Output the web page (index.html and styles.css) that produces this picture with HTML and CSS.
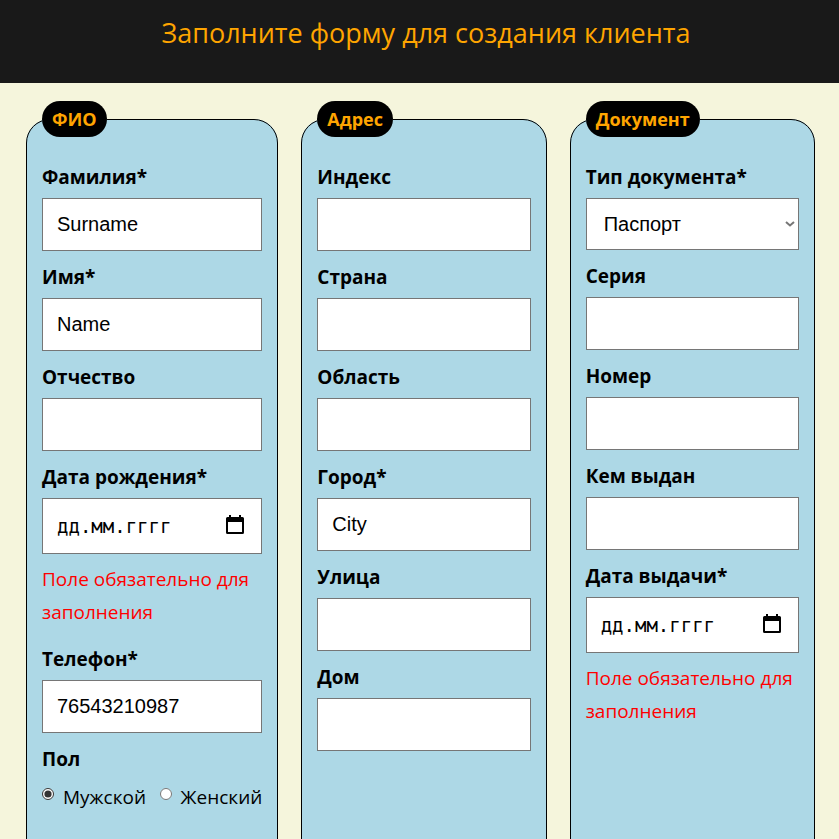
FILE: index.html
```html
<!DOCTYPE html>
<html lang="ru">
<head>
<meta charset="utf-8">
<meta name="viewport" content="width=device-width, initial-scale=1">
<title>Создание клиента</title>
<link rel="stylesheet" href="styles.css">
</head>
<body>
<header class="header">
  <h1 class="title">Заполните форму для создания клиента</h1>
</header>
<form class="form">
  <fieldset class="card">
    <legend class="badge">ФИО</legend>
    <div class="field"><label for="surname">Фамилия*</label><input class="control" id="surname" type="text" value="Surname"></div>
    <div class="field"><label for="name">Имя*</label><input class="control" id="name" type="text" value="Name"></div>
    <div class="field"><label for="patronymic">Отчество</label><input class="control" id="patronymic" type="text"></div>
    <div class="field">
      <label for="birth">Дата рождения*</label>
      <div class="wrap">
        <input class="control date" id="birth" type="text" placeholder="дд.мм.гггг">
        <button class="calendar" type="button" aria-label="Календарь"><svg viewBox="0 0 18 20"><path fill-rule="evenodd" d="M3 0h2v2h8V0h2v2h1.500q1.500 0 1.500 1.500v14q0 1.500-1.500 1.500h-15Q0 19 0 17.500v-14Q0 2 1.500 2H3zM2 7v10h14V7z"/></svg></button>
      </div>
      <p class="error">Поле обязательно для заполнения</p>
    </div>
    <div class="field"><label for="phone">Телефон*</label><input class="control" id="phone" type="tel" value="76543210987"></div>
    <div class="field" role="radiogroup" aria-labelledby="sex">
      <span class="caption" id="sex">Пол</span>
      <div class="radios">
        <label class="radio"><input type="radio" name="sex" checked>Мужской</label>
        <label class="radio"><input type="radio" name="sex">Женский</label>
      </div>
    </div>
  </fieldset>
  <fieldset class="card">
    <legend class="badge">Адрес</legend>
    <div class="field"><label for="index">Индекс</label><input class="control" id="index" type="text"></div>
    <div class="field"><label for="country">Страна</label><input class="control" id="country" type="text"></div>
    <div class="field"><label for="region">Область</label><input class="control" id="region" type="text"></div>
    <div class="field"><label for="city">Город*</label><input class="control" id="city" type="text" value="City"></div>
    <div class="field"><label for="street">Улица</label><input class="control" id="street" type="text"></div>
    <div class="field"><label for="house">Дом</label><input class="control" id="house" type="text"></div>
  </fieldset>
  <fieldset class="card">
    <legend class="badge">Документ</legend>
    <div class="field">
      <label for="doctype">Тип документа*</label>
      <div class="wrap">
        <select class="control select" id="doctype"><option>Паспорт</option></select>
        <svg class="chevron" viewBox="0 0 10 6"><path d="M1 1l4 3.500L9 1"/></svg>
      </div>
    </div>
    <div class="field"><label for="series">Серия</label><input class="control" id="series" type="text"></div>
    <div class="field"><label for="number">Номер</label><input class="control" id="number" type="text"></div>
    <div class="field"><label for="issuer">Кем выдан</label><input class="control" id="issuer" type="text"></div>
    <div class="field">
      <label for="issued">Дата выдачи*</label>
      <div class="wrap">
        <input class="control date" id="issued" type="text" placeholder="дд.мм.гггг">
        <button class="calendar" type="button" aria-label="Календарь"><svg viewBox="0 0 18 20"><path fill-rule="evenodd" d="M3 0h2v2h8V0h2v2h1.500q1.500 0 1.500 1.500v14q0 1.500-1.500 1.500h-15Q0 19 0 17.500v-14Q0 2 1.500 2H3zM2 7v10h14V7z"/></svg></button>
      </div>
      <p class="error">Поле обязательно для заполнения</p>
    </div>
  </fieldset>
</form>
</body>
</html>
```
FILE: styles.css
```css
* {
  box-sizing: border-box;
}

body {
  margin: 0;
  background: beige;
  color: #000;
  font-family: "Open Sans", "Noto Sans", sans-serif;
  font-size: 19px;
}

.header {
  padding: 13px 0 30px 13px;
  background: #191919;
}

.title {
  margin: 0;
  color: orange;
  font-size: 27px;
  font-weight: 400;
  line-height: 40px;
  text-align: center;
}

.form {
  display: grid;
  grid-template-columns: 36fr 35fr 35fr;
  gap: 23px;
  padding: 18px 24px 18px 26px;
}

.card {
  min-width: 0;
  margin: 0;
  padding: 27px 15px 80px;
  border: 1px solid #000;
  border-radius: 24px;
  background: lightblue;
}

.badge {
  padding: 1px 10px 0;
  border-radius: 18px;
  background: #000;
  color: orange;
  font-size: 18px;
  font-weight: 700;
  line-height: 35px;
}

.field {
  display: flex;
  flex-direction: column;
  gap: 8px;
  margin-bottom: 13px;
  line-height: 26px;
}

.field > label,
.caption {
  font-size: 19px;
  font-weight: 700;
}

.control {
  display: block;
  width: 100%;
  height: 53px;
  margin: 0;
  padding: 0 14px;
  border: 1px solid #767676;
  border-radius: 0;
  background: #fff;
  color: #000;
  font-family: "Liberation Sans", Arial, sans-serif;
  font-size: 20px;
}

.wrap {
  position: relative;
}

.select {
  height: 52px;
  padding: 0 17px;
  appearance: none;
}

.chevron {
  position: absolute;
  top: 23px;
  right: 4px;
  width: 10px;
  height: 6px;
  fill: none;
  stroke: #767676;
  stroke-width: 2;
  pointer-events: none;
}

.date {
  height: 56px;
  font-family: "DejaVu Sans Mono", monospace;
  font-size: 19px;
}

.date::placeholder {
  color: #000;
  opacity: 1;
}

.calendar {
  position: absolute;
  top: 17px;
  right: 18px;
  width: 18px;
  height: 20px;
  padding: 0;
  border: 0;
  background: none;
}

.calendar svg {
  display: block;
  width: 18px;
  height: 20px;
}

.error {
  margin: 1px 0 4px;
  color: red;
  font-size: 19px;
  line-height: 33px;
}

.radios {
  display: flex;
  justify-content: space-between;
  padding-top: 4px;
}

.radio {
  display: flex;
  align-items: center;
  gap: 9px;
}

.radio input {
  width: 12px;
  height: 12px;
  margin: 0 0 6px;
  accent-color: #333;
}
```
